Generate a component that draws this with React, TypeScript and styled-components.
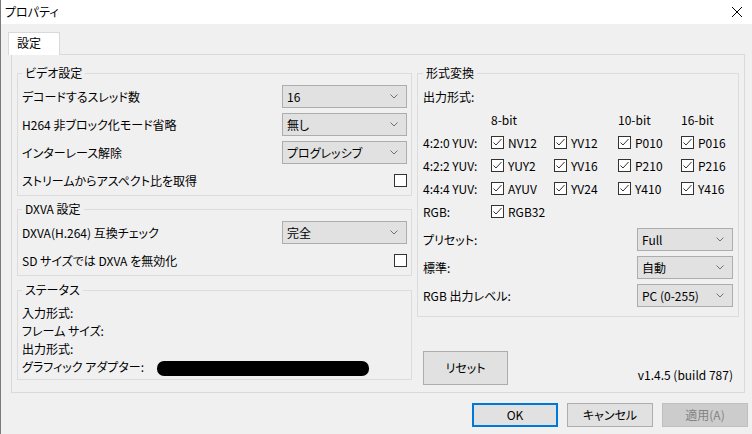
import React from "react";
import styled, { createGlobalStyle } from "styled-components";

const Global = createGlobalStyle`
  html, body { margin: 0; padding: 0; background: #f0f0f0; }
  body {
    font-family: "Noto Sans CJK JP", "Noto Sans", sans-serif;
    font-size: 12px;
    color: #000;
    font-feature-settings: "palt";
  }
  * { box-sizing: border-box; }
`;

const Window = styled.div`
  width: 752px;
  height: 434px;
  background: #f0f0f0;
  border-left: 1px solid #7a7a7a;
  display: flex;
  flex-direction: column;
  overflow: hidden;
`;

const TitleBar = styled.div`
  height: 24px;
  flex: none;
  background: #fff;
  display: flex;
  align-items: center;
  justify-content: space-between;
  padding: 0 10px 0 4px;
`;

const Title = styled.span`
  line-height: 16px;
`;

const Body = styled.div`
  padding: 8px 4px 0 7px;
  display: flex;
  flex-direction: column;
`;

const TabStrip = styled.div`
  display: flex;
  height: 22px;
`;

const Tab = styled.div`
  width: 52px;
  height: 23px;
  background: #fff;
  border: 1px solid #d9d9d9;
  border-bottom: none;
  padding-left: 8px;
  line-height: 20px;
  position: relative;
  z-index: 1;
`;

const TabPage = styled.div`
  margin-left: 3px;
  width: 734px;
  height: 339px;
  border: 1px solid #d9d9d9;
  padding: 10px 5px 0 5px;
  display: grid;
  grid-template-columns: 395px 322px;
  column-gap: 5px;
  align-items: start;
`;

const Column = styled.div`
  display: flex;
  flex-direction: column;
  gap: 5px;
`;

const Group = styled.fieldset<{ $padX?: number; $padBottom?: number; $mt?: number }>`
  margin: ${(p) => p.$mt ?? 0}px 0 0 0;
  min-width: 0;
  border: 1px solid #dcdcdc;
  padding: 0 ${(p) => p.$padX ?? 4}px ${(p) => p.$padBottom ?? 3}px;
`;

const Legend = styled.legend`
  padding: 0 3px 0 3px;
  margin-left: 0;
  line-height: 16px;
  height: 16px;
`;

const Rows = styled.div<{ $top?: number }>`
  display: flex;
  flex-direction: column;
  gap: 5px;
  padding-top: ${(p) => p.$top ?? 4}px;
`;

const Row = styled.div`
  height: 23px;
  display: flex;
  align-items: center;
  justify-content: space-between;
  line-height: 16px;
`;

const SelectBox = styled.div<{ $w: number }>`
  width: ${(p) => p.$w}px;
  height: 23px;
  background: #e1e1e1;
  border: 1px solid #adadad;
  display: flex;
  align-items: center;
  justify-content: space-between;
  padding: 0 8px 0 4px;
  line-height: 16px;
`;

const Box = styled.span`
  width: 13px;
  height: 13px;
  flex: none;
  background: #fff;
  border: 1px solid #333;
  display: inline-flex;
`;

const StatusGrid = styled.div`
  display: grid;
  grid-template-columns: 135px auto;
  grid-auto-rows: 18px;
  align-items: center;
  padding-top: 6px;
  line-height: 16px;
`;

const Redacted = styled.span`
  display: block;
  width: 212px;
  height: 15px;
  background: #000;
  border-radius: 7px;
  margin-top: 2px;
`;

const PlainLabel = styled.div`
  margin-top: 7px;
  height: 18px;
  line-height: 18px;
`;

const FormatGrid = styled.div`
  margin-top: 2px;
  display: grid;
  grid-template-columns: 68px 63px 64px 63px 1fr;
  grid-auto-rows: 23px;
  align-items: center;
  line-height: 16px;
`;

const CheckItem = styled.span`
  display: inline-flex;
  align-items: center;
  gap: 4px;
`;

const Footer = styled.div`
  margin-top: 29px;
  padding: 0 6px;
  display: flex;
  justify-content: space-between;
  align-items: flex-end;
`;

const Button = styled.button<{ $variant?: "default" | "primary" | "disabled"; $w?: number; $h?: number }>`
  width: ${(p) => p.$w ?? 86}px;
  height: ${(p) => p.$h ?? 24}px;
  font: inherit;
  line-height: 16px;
  padding: 0;
  background: ${(p) => (p.$variant === "disabled" ? "#cccccc" : "#e1e1e1")};
  color: ${(p) => (p.$variant === "disabled" ? "#838383" : "#000")};
  border: ${(p) =>
    p.$variant === "primary"
      ? "2px solid #0078d7"
      : p.$variant === "disabled"
      ? "1px solid #bfbfbf"
      : "1px solid #adadad"};
  border-radius: 0;
`;

const Version = styled.span`
  line-height: 16px;
  margin-bottom: 2px;
`;

const ButtonRow = styled.div`
  margin-top: 10px;
  display: flex;
  justify-content: flex-end;
  gap: 9px;
`;

const Chevron = () => (
  <svg width="8" height="5" viewBox="0 0 8 5">
    <path d="M0.5 0.5 L4 4 L7.5 0.5" fill="none" stroke="#707070" strokeWidth="1" />
  </svg>
);

const Check = ({ checked }: { checked?: boolean }) => (
  <Box>
    {checked && (
      <svg width="11" height="11" viewBox="0 0 11 11">
        <path d="M1.5 5.5 L4 8 L9.5 2" fill="none" stroke="#333" strokeWidth="1" />
      </svg>
    )}
  </Box>
);

const Select = ({ value, w }: { value: string; w: number }) => (
  <SelectBox $w={w}>
    <span>{value}</span>
    <Chevron />
  </SelectBox>
);

const formatRows: { label: string; items: string[] }[] = [
  { label: "4:2:0 YUV:", items: ["NV12", "YV12", "P010", "P016"] },
  { label: "4:2:2 YUV:", items: ["YUY2", "YV16", "P210", "P216"] },
  { label: "4:4:4 YUV:", items: ["AYUV", "YV24", "Y410", "Y416"] },
  { label: "RGB:", items: ["RGB32"] },
];

export default function App() {
  return (
    <>
      <Global />
      <Window>
        <TitleBar>
          <Title>プロパティ</Title>
          <svg width="10" height="10" viewBox="0 0 10 10">
            <path d="M0 0 L10 10 M10 0 L0 10" stroke="#000" strokeWidth="1" />
          </svg>
        </TitleBar>
        <Body>
          <TabStrip>
            <Tab>設定</Tab>
          </TabStrip>
          <TabPage>
            <Column>
              <Group>
                <Legend>ビデオ設定</Legend>
                <Rows>
                  <Row>
                    <span>デコードするスレッド数</span>
                    <Select value="16" w={125} />
                  </Row>
                  <Row>
                    <span>H264 非ブロック化モード省略</span>
                    <Select value="無し" w={125} />
                  </Row>
                  <Row>
                    <span>インターレース解除</span>
                    <Select value="プログレッシブ" w={125} />
                  </Row>
                  <Row>
                    <span>ストリームからアスペクト比を取得</span>
                    <Check />
                  </Row>
                </Rows>
              </Group>
              <Group>
                <Legend>DXVA 設定</Legend>
                <Rows>
                  <Row>
                    <span>DXVA(H.264) 互換チェック</span>
                    <Select value="完全" w={125} />
                  </Row>
                  <Row>
                    <span>SD サイズでは DXVA を無効化</span>
                    <Check />
                  </Row>
                </Rows>
              </Group>
              <Group $mt={1}>
                <Legend>ステータス</Legend>
                <StatusGrid>
                  <span>入力形式:</span>
                  <span />
                  <span>フレーム サイズ:</span>
                  <span />
                  <span>出力形式:</span>
                  <span />
                  <span>グラフィック アダプター:</span>
                  <Redacted />
                </StatusGrid>
              </Group>
            </Column>
            <Column>
              <Group $padX={5} $padBottom={9}>
                <Legend>形式変換</Legend>
                <PlainLabel>出力形式:</PlainLabel>
                <FormatGrid>
                  <span />
                  <span>8-bit</span>
                  <span />
                  <span>10-bit</span>
                  <span>16-bit</span>
                  {formatRows.map((r) => (
                    <React.Fragment key={r.label}>
                      <span>{r.label}</span>
                      {[0, 1, 2, 3].map((i) =>
                        r.items[i] ? (
                          <CheckItem key={i}>
                            <Check checked />
                            <span>{r.items[i]}</span>
                          </CheckItem>
                        ) : (
                          <span key={i} />
                        )
                      )}
                    </React.Fragment>
                  ))}
                </FormatGrid>
                <Rows $top={5}>
                  <Row>
                    <span>プリセット:</span>
                    <Select value="Full" w={96} />
                  </Row>
                  <Row>
                    <span>標準:</span>
                    <Select value="自動" w={96} />
                  </Row>
                  <Row>
                    <span>RGB 出力レベル:</span>
                    <Select value="PC (0-255)" w={96} />
                  </Row>
                </Rows>
              </Group>
              <Footer>
                <Button $w={85} $h={34}>リセット</Button>
                <Version>v1.4.5 (build 787)</Version>
              </Footer>
            </Column>
          </TabPage>
          <ButtonRow>
            <Button $variant="primary">OK</Button>
            <Button>キャンセル</Button>
            <Button $variant="disabled">適用(A)</Button>
          </ButtonRow>
        </Body>
      </Window>
    </>
  );
}
